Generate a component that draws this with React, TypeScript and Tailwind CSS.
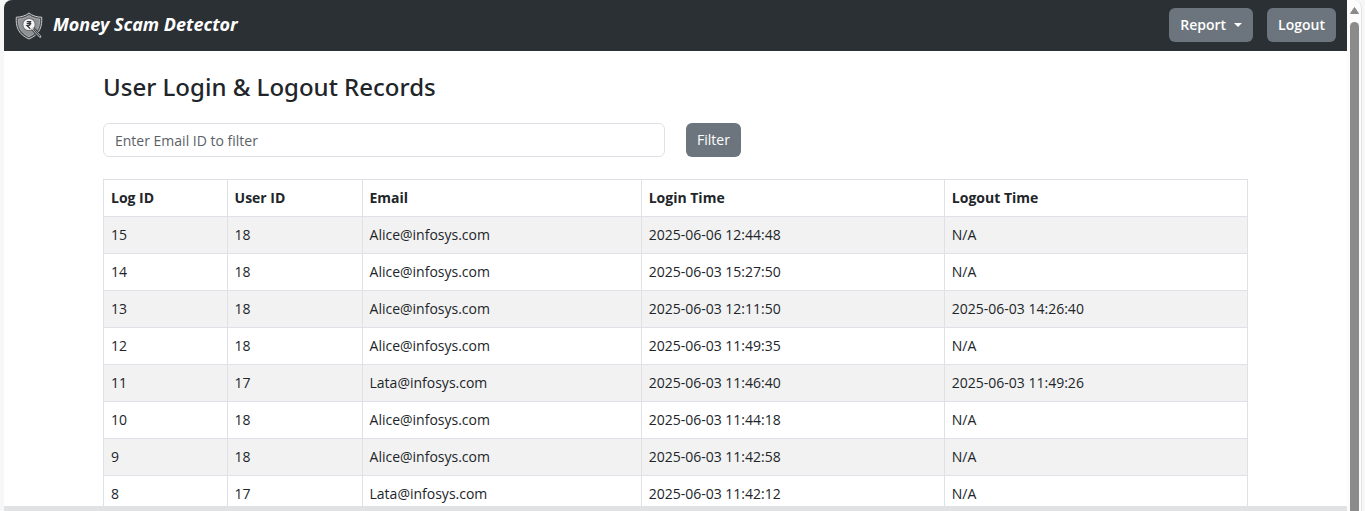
import { useState } from "react";

type LogRecord = {
  logId: number;
  userId: number;
  email: string;
  login: string;
  logout: string;
};

const records: LogRecord[] = [
  { logId: 15, userId: 18, email: "Alice@infosys.com", login: "2025-06-06 12:44:48", logout: "N/A" },
  { logId: 14, userId: 18, email: "Alice@infosys.com", login: "2025-06-03 15:27:50", logout: "N/A" },
  { logId: 13, userId: 18, email: "Alice@infosys.com", login: "2025-06-03 12:11:50", logout: "2025-06-03 14:26:40" },
  { logId: 12, userId: 18, email: "Alice@infosys.com", login: "2025-06-03 11:49:35", logout: "N/A" },
  { logId: 11, userId: 17, email: "Lata@infosys.com", login: "2025-06-03 11:46:40", logout: "2025-06-03 11:49:26" },
  { logId: 10, userId: 18, email: "Alice@infosys.com", login: "2025-06-03 11:44:18", logout: "N/A" },
  { logId: 9, userId: 18, email: "Alice@infosys.com", login: "2025-06-03 11:42:58", logout: "N/A" },
  { logId: 8, userId: 17, email: "Lata@infosys.com", login: "2025-06-03 11:42:12", logout: "N/A" },
];

const columns = ["Log ID", "User ID", "Email", "Login Time", "Logout Time"];

function ShieldLogo() {
  return (
    <svg viewBox="0 0 28 28" className="h-7 w-7 shrink-0" aria-hidden="true">
      <path d="M14 1 C11 3.600 6 5.200 1.300 5.200 C.6 14 3 22.500 14 27 C25 22.500 27.400 14 26.700 5.200 C22 5.200 17 3.600 14 1Z" fill="#4a4f53" stroke="#c9cbcc" strokeWidth="1" />
      <path d="M14 3.500 C11.200 5.500 7.300 6.900 3.400 7.100 C3 14.500 5.500 20.700 14 24.700 C22.500 20.700 25 14.500 24.600 7.100 C20.700 6.900 16.800 5.500 14 3.500Z" fill="#8f9294" stroke="#b8babc" strokeWidth=".8" />
      <circle cx="14" cy="12.500" r="6.600" fill="#6f7376" />
      <circle cx="14" cy="12.500" r="5.600" fill="#f7f7f7" />
      <path d="M11.700 9.700h4.600M11.700 11.700h4.600M12.300 9.700c4 0 4 4-.3 4l3.300 3" fill="none" stroke="#33383b" strokeWidth="1.200" />
      <path d="M17.800 16.700l7.600 8.300" stroke="#2c3034" strokeWidth="4" />
      <path d="M17.800 16.700l7.300 7.800" stroke="#c9cbcc" strokeWidth="2.400" strokeLinecap="round" />
      <path d="M18.600 17.400l6.300 6.800" stroke="#3a3f43" strokeWidth="1.100" strokeLinecap="round" />
    </svg>
  );
}

function Navbar() {
  return (
    <nav className="flex h-[51px] shrink-0 items-start justify-between rounded-tl-lg bg-[#2b3035] pt-2 pr-[11px] pl-[11px]">
      <a href="#" className="flex h-9 items-center gap-[10px] font-['Noto_Sans',sans-serif] text-lg leading-6 font-bold text-white italic">
        <ShieldLogo />
        <span className="pb-1">Money Scam Detector</span>
      </a>
      <div className="flex items-center gap-[14px] text-sm font-semibold text-white">
        <button type="button" className="flex h-[34px] items-center gap-2 rounded-md bg-[#6c757d] px-[11px]">
          Report
          <svg viewBox="0 0 8 4" className="h-1 w-2" fill="currentColor" aria-hidden="true">
            <path d="M0 0h8L4 4z" />
          </svg>
        </button>
        <button type="button" className="h-[34px] rounded-md bg-[#6c757d] px-[11px]">
          Logout
        </button>
      </div>
    </nav>
  );
}

function Scrollbar() {
  return (
    <div className="flex w-[15px] shrink-0 flex-col items-center rounded-tr-lg border-r border-[#e4e4e4] bg-[#fcfcfc] pt-[7px]" aria-hidden="true">
      <svg viewBox="0 0 9 7" className="h-[7px] w-[9px] shrink-0" fill="#8b8b8b">
        <path d="M4.500 0.500 8.500 6.500H.5z" stroke="#8b8b8b" strokeLinejoin="round" />
      </svg>
      <div className="mt-2 w-[9px] grow rounded-t-full bg-[#8b8b8b]" />
    </div>
  );
}

export default function App() {
  const [query, setQuery] = useState("");
  const [filter, setFilter] = useState("");
  const rows = records.filter((r) => r.email.toLowerCase().includes(filter.toLowerCase()));

  return (
    <div className="flex h-screen overflow-hidden bg-[#f7f7f7] pr-[3px] pl-1 font-['Open_Sans',sans-serif] text-sm text-[#212529]">
      <div className="flex min-w-0 grow flex-col">
        <Navbar />
        <main className="min-h-0 grow overflow-hidden border-b-[5px] border-[#e1e2e4] bg-white px-6">
          <div className="mx-auto max-w-[1145px] pt-5">
            <h1 className="font-['Noto_Sans',sans-serif] text-2xl leading-8 font-medium">User Login &amp; Logout Records</h1>
            <form
              className="mt-5 grid grid-cols-2 gap-[21px]"
              onSubmit={(e) => {
                e.preventDefault();
                setFilter(query);
              }}
            >
              <input
                type="text"
                aria-label="Email ID"
                placeholder="Enter Email ID to filter"
                value={query}
                onChange={(e) => setQuery(e.target.value)}
                className="h-[34px] w-full rounded-md border border-[#dee2e6] bg-white px-[11px] placeholder:text-[#5b6167]"
              />
              <button type="submit" className="h-[34px] justify-self-start rounded-md bg-[#6c757d] px-[11px] text-white">
                Filter
              </button>
            </form>
            <table className="mt-[22px] w-full table-fixed border-collapse text-left leading-5">
              <colgroup>
                <col className="w-[10.8%]" />
                <col className="w-[11.8%]" />
                <col className="w-[24.4%]" />
                <col className="w-[26.5%]" />
                <col className="w-[26.5%]" />
              </colgroup>
              <thead>
                <tr>
                  {columns.map((name) => (
                    <th key={name} scope="col" className="border border-[#dee2e6] px-[7px] py-2 font-bold">
                      {name}
                    </th>
                  ))}
                </tr>
              </thead>
              <tbody>
                {rows.map((r) => (
                  <tr key={r.logId} className="odd:bg-[#f2f2f2]">
                    {[r.logId, r.userId, r.email, r.login, r.logout].map((value, i) => (
                      <td key={columns[i]} className="border border-[#dee2e6] px-[7px] py-2">
                        {value}
                      </td>
                    ))}
                  </tr>
                ))}
              </tbody>
            </table>
          </div>
        </main>
      </div>
      <Scrollbar />
    </div>
  );
}
